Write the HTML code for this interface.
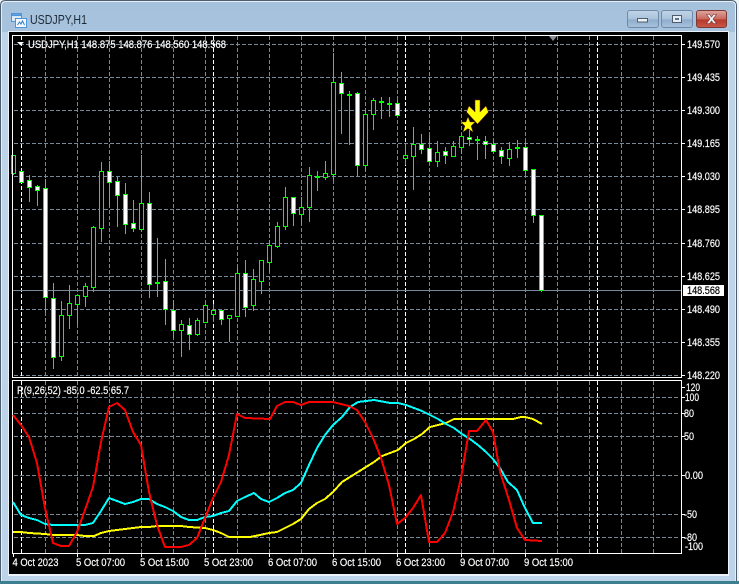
<!DOCTYPE html>
<html><head><meta charset="utf-8"><style>
html,body{margin:0;padding:0;width:739px;height:584px;overflow:hidden;background:#dfe8f1}
svg{display:block;position:absolute;left:0;top:0}
text{font-family:"Liberation Sans",sans-serif;font-size:11px;fill:#fff;stroke:#fff;stroke-width:.18px}
.c{shape-rendering:crispEdges}
</style></head><body>
<svg width="739" height="584" viewBox="0 0 739 584" xmlns="http://www.w3.org/2000/svg">
<defs>
<linearGradient id="tb" x1="0" y1="0" x2="0" y2="1"><stop offset="0" stop-color="#a6c1dc"/><stop offset="1" stop-color="#bed4e9"/></linearGradient>
<linearGradient id="side" x1="0" y1="0" x2="0" y2="1"><stop offset="0" stop-color="#bed4e9"/><stop offset="1" stop-color="#bcd3ea"/></linearGradient>
<linearGradient id="btn" x1="0" y1="0" x2="0" y2="1"><stop offset="0" stop-color="#c2d5e8"/><stop offset=".5" stop-color="#a9c2db"/><stop offset=".55" stop-color="#8faccb"/><stop offset="1" stop-color="#a9c3de"/></linearGradient>
<linearGradient id="cl" x1="0" y1="0" x2="0" y2="1"><stop offset="0" stop-color="#dfa79f"/><stop offset=".5" stop-color="#c9675c"/><stop offset=".55" stop-color="#b83a2b"/><stop offset="1" stop-color="#c9584a"/></linearGradient>
</defs>
<rect x="0" y="0" width="739" height="584" fill="#eef3f8"/>
<path d="M.5 583.5V5.5Q.5 .5 5.5 .5H731Q736.5 .5 736.5 6V583.5" fill="url(#tb)" stroke="#4d5f6e"/>
<path d="M1.5 582V6Q1.5 1.5 6 1.5H731Q735.5 1.5 735.5 6V582" fill="none" stroke="#e6eef6"/>
<rect x="2" y="32" width="733" height="549" fill="url(#side)"/>
<rect x="0" y="581" width="739" height="3" fill="#3d7f8f"/>
<rect x="8" y="31" width="721" height="545" fill="#eaf1f8"/>
<rect x="9" y="32" width="719" height="542" fill="#000"/>

<!-- title -->
<g class="c">
<rect x="11.5" y="13.5" width="10" height="8" fill="#d7e8f7" stroke="#4d95d6"/>
<rect x="11.5" y="13.5" width="10" height="2" fill="#5aa2e0" stroke="#4d95d6"/>
<rect x="15.5" y="18.5" width="11" height="9" fill="#f2f8fd" stroke="#4d95d6"/>
</g>
<path d="M17.5 25l2-3 1.500 2 1.500-3 2 4" fill="none" stroke="#2e7fc8" stroke-width="1"/>
<text x="30" y="24" textLength="57" lengthAdjust="spacingAndGlyphs" style="font-size:12.5px;fill:#1c2a38;stroke:none">USDJPY,H1</text>

<!-- buttons -->
<rect x="627.5" y="10.5" width="31" height="17" rx="2.500" fill="url(#btn)" stroke="#6f8aa8"/>
<rect x="637.500" y="18.500" width="10" height="3.500" fill="#eef3f8" stroke="#4e5c6b"/>
<rect x="661.5" y="10.5" width="31" height="17" rx="2.500" fill="url(#btn)" stroke="#6f8aa8"/>
<rect x="672.5" y="15.5" width="9" height="7" fill="#e6edf4" stroke="#4e5c6b"/>
<rect x="675" y="18" width="4" height="2" fill="#5d7590"/>
<rect x="696.5" y="10.5" width="30" height="17" rx="2.500" fill="url(#cl)" stroke="#7d3a34"/>
<path d="M706.500 14.500h3l2 2.500 2-2.500h3l-3.500 4.500 3.500 4.500h-3l-2-2.500-2 2.500h-3l3.500-4.500z" fill="#f3f3f3" stroke="#6b3a36" stroke-width=".6"/>

<!-- grid -->
<g class="c" fill="none">
<path stroke="#778899" stroke-dasharray="4 2" d="M14 44.500H680M14 77.500H680M14 110.500H680M14 143.500H680M14 176.500H680M14 209.500H680M14 243.500H680M14 276.500H680M14 309.500H680M14 342.500H680M14 375.500H680M14 397.500H680M14 413.500H680M14 436.500H680M14 475.500H680M14 514.500H680M14 537.500H680"/>
<path stroke="#778899" stroke-dasharray="4 2" d="M45.500 36V377M77.500 36V377M109.500 36V377M141.500 36V377M173.500 36V377M205.500 36V377M237.500 36V377M269.500 36V377M301.500 36V377M333.500 36V377M365.500 36V377M397.500 36V377M429.500 36V377M461.500 36V377M493.500 36V377M525.500 36V377M557.500 36V377M589.500 36V377M621.500 36V377M653.500 36V377M45.500 381V553M77.500 381V553M109.500 381V553M141.500 381V553M173.500 381V553M205.500 381V553M237.500 381V553M269.500 381V553M301.500 381V553M333.500 381V553M365.500 381V553M397.500 381V553M429.500 381V553M461.500 381V553M493.500 381V553M525.500 381V553M557.500 381V553M589.500 381V553M621.500 381V553M653.500 381V553"/>
<path stroke="#fff" stroke-dasharray="4 2" d="M21.500 36V377M213.500 36V377M405.500 36V377M597.500 36V377M21.500 381V553M213.500 381V553M405.500 381V553M597.500 381V553"/>
<path stroke="#778899" d="M13 290.500H682"/>

<!-- wicks -->
<path stroke="#00ff00" d="M13.500 155V175M21.500 171V183M29.500 175V202M37.500 185V206M45.500 179V313M53.500 283V369M61.500 301V361M69.500 285V329M77.500 295V324M85.500 283V307M93.500 226V292M101.500 162V242M109.500 161V206M117.500 177V227M125.500 183V234M133.500 200V232M141.500 155V231M149.500 192V298M157.500 238V297M165.500 259V325M173.500 300V338M181.500 320V357M189.500 318V350M197.500 318V336M205.500 304V322M213.500 304V322M221.500 310V325M229.500 315V342M237.500 268V317M245.500 260V317M253.500 269V311M261.500 260V294M269.500 240V272M277.500 222V248M285.500 187V230M293.500 197V226M301.500 197V225M309.500 167V222M317.500 171V191M325.500 161V180M333.500 53V180M341.500 72V134M349.500 91V145M357.500 92V176M365.500 110V171M373.500 98V130M381.500 97V119M389.500 97V117M397.500 100V116M405.500 143V165M413.500 127V190M421.500 134V154M429.500 135V161M437.500 141V167M445.500 147V164M453.500 141V156M461.500 134V154M469.500 130V146M477.500 136V160M485.500 136V159M493.500 142V152M501.500 147V164M509.500 142V166M517.500 140V158M525.500 142V174M533.500 169V223M541.500 215V292"/>
<!-- flat bodies -->
<path stroke="#00ff00" stroke-width="2" d="M155 283H160M347 95H352M315 177H320M379 102H384M387 104H392M475 140H480M515 148H520"/>
<!-- hollow bodies -->
<g fill="#000" stroke="#00ff00">
<rect x="11.500" y="155.500" width="4" height="18"/><rect x="59.500" y="315.500" width="4" height="41"/><rect x="67.500" y="303.500" width="4" height="12"/><rect x="75.500" y="295.500" width="4" height="9"/><rect x="83.500" y="286.500" width="4" height="10"/><rect x="91.500" y="227.500" width="4" height="60"/><rect x="99.500" y="171.500" width="4" height="57"/><rect x="139.500" y="203.500" width="4" height="26"/><rect x="179.500" y="324.500" width="4" height="6"/><rect x="195.500" y="320.500" width="4" height="14"/><rect x="203.500" y="305.500" width="4" height="17"/><rect x="211.500" y="310.500" width="4" height="4"/><rect x="227.500" y="315.500" width="4" height="3"/><rect x="235.500" y="273.500" width="4" height="43"/><rect x="251.500" y="279.500" width="4" height="26"/><rect x="259.500" y="260.500" width="4" height="21"/><rect x="267.500" y="245.500" width="4" height="17"/><rect x="275.500" y="226.500" width="4" height="20"/><rect x="283.500" y="197.500" width="4" height="29"/><rect x="299.500" y="207.500" width="4" height="7"/><rect x="307.500" y="175.500" width="4" height="32"/><rect x="323.500" y="173.500" width="4" height="4"/><rect x="331.500" y="82.500" width="4" height="92"/><rect x="363.500" y="114.500" width="4" height="51"/><rect x="371.500" y="100.500" width="4" height="14"/><rect x="403.500" y="155.500" width="4" height="3"/><rect x="411.500" y="144.500" width="4" height="12"/><rect x="435.500" y="152.500" width="4" height="9"/><rect x="451.500" y="146.500" width="4" height="10"/><rect x="459.500" y="136.500" width="4" height="11"/><rect x="507.500" y="149.500" width="4" height="9"/>
</g>
<!-- white bodies -->
<g fill="#fff" stroke="#00ff00">
<rect x="19.500" y="171.500" width="4" height="11"/><rect x="27.500" y="180.500" width="4" height="7"/><rect x="35.500" y="186.500" width="4" height="4"/><rect x="43.500" y="188.500" width="4" height="109"/><rect x="51.500" y="298.500" width="4" height="59"/><rect x="107.500" y="171.500" width="4" height="11"/><rect x="115.500" y="181.500" width="4" height="14"/><rect x="123.500" y="194.500" width="4" height="30"/><rect x="131.500" y="223.500" width="4" height="5"/><rect x="147.500" y="203.500" width="4" height="81"/><rect x="163.500" y="281.500" width="4" height="28"/><rect x="171.500" y="310.500" width="4" height="20"/><rect x="187.500" y="325.500" width="4" height="9"/><rect x="219.500" y="310.500" width="4" height="9"/><rect x="243.500" y="273.500" width="4" height="34"/><rect x="291.500" y="197.500" width="4" height="16"/><rect x="339.500" y="83.500" width="4" height="10"/><rect x="355.500" y="93.500" width="4" height="72"/><rect x="395.500" y="103.500" width="4" height="12"/><rect x="419.500" y="144.500" width="4" height="5"/><rect x="427.500" y="148.500" width="4" height="13"/><rect x="443.500" y="151.500" width="4" height="4"/><rect x="467.500" y="137.500" width="4" height="2"/><rect x="483.500" y="141.500" width="4" height="3"/><rect x="491.500" y="144.500" width="4" height="7"/><rect x="499.500" y="150.500" width="4" height="6"/><rect x="523.500" y="147.500" width="4" height="23"/><rect x="531.500" y="169.500" width="4" height="46"/><rect x="539.500" y="215.500" width="4" height="75"/>
</g>

<!-- frames -->
<rect x="12.500" y="35.500" width="669" height="342" stroke="#fff"/>
<rect x="12.500" y="380.500" width="669" height="173" stroke="#fff"/>
<path stroke="#fff" d="M682 44.500h3M682 77.500h3M682 110.500h3M682 143.500h3M682 176.500h3M682 209.500h3M682 243.500h3M682 276.500h3M682 309.500h3M682 342.500h3M682 375.500h3M682 387.500h3M682 397.500h3M682 413.500h3M682 436.500h3M682 475.500h3M682 514.500h3M682 537.500h3M13.500 553V557M77.500 553V557M141.500 553V557M205.500 553V557M269.500 553V557M333.500 553V557M397.500 553V557M461.500 553V557M525.500 553V557"/>
<rect x="683" y="285" width="41" height="11" fill="#fff"/>
</g>
<path d="M17 42h7l-3.500 3.500z" fill="#fff"/>
<path d="M549 36h8l-4 5z" fill="#8a8f96"/>

<!-- indicator lines -->
<g class="c" fill="none" stroke-width="2" stroke-linejoin="round">
<polyline stroke="#ffff00" points="13,532 21,532 29,533 45,534 53,535 77,535 85,536 94,536 101,533 109,531 117,530 125,529 133,528 141,527 149,527 157,526 181,526 189,527 205,528 213,530 221,533 229,537 250,537 260,535 269,533 277,532 285,528 293,524 301,519 309,509 317,503 325,499 333,492 342,482 350,477 358,472 366,467 374,462 382,456 398,450 406,443 414,439 422,434 430,427 438,425 446,423 454,419 513,419 521,417 525,417 533,419 542,424"/>
<polyline stroke="#00ffff" points="13,502 21,515 29,518 37,520 45,524 53,525 85,525 93,523 101,511 109,498 117,501 125,504 133,502 141,499 149,499 157,504 165,507 173,511 181,517 189,520 197,520 205,517 213,516 221,513 229,511 237,501 245,497 254,493 261,499 269,502 277,498 285,493 293,490 301,483 309,465 317,448 325,435 333,425 342,417 350,407 358,402 366,401 374,400 390,403 398,403 406,405 414,408 422,411 430,415 438,419 446,424 454,428 462,434 470,439 478,445 486,452 493,459 500,468 508,482 517,490 525,508 533,523 542,523"/>
<polyline stroke="#ff0000" points="13,415 21,425 29,437 37,463 45,508 53,543 61,546 69,546 77,532 85,510 93,487 101,442 109,407 117,403 125,410 133,432 141,445 149,492 157,525 165,547 181,547 189,545 197,538 205,518 213,498 221,482 229,455 237,414 245,418 270,419 277,406 285,402 293,402 301,405 309,402 333,402 349,406 357,410 365,422 373,438 381,458 389,485 397,524 405,518 413,508 421,495 429,542 437,542 445,533 453,512 461,478 469,431 477,431 486,420 493,432 500,472 509,500 517,528 525,540 542,541"/>
</g>

<!-- arrow & star -->
<polygon points="475,100 480,100 480,112 486,106 488.500,112 477.500,124 466.500,112 469,106 475,112" fill="#ffff00" stroke="#7a1a00" stroke-width=".5"/>
<polygon points="468,117 470,122 475,122 471,126 473,132 468,128.500 463,132 465,126 461,122 466,122" fill="#ffff00" stroke="#7a3a00" stroke-width=".4"/>

<!-- labels -->
<text x="28" y="48" textLength="198" lengthAdjust="spacingAndGlyphs">USDJPY,H1  148.875 148.876 148.560 148.568</text>
<text x="17" y="394" textLength="112" lengthAdjust="spacingAndGlyphs">R(9,26,52) -85.0 -62.5 65.7</text>
<g>
<text x="687" y="48" textLength="33" lengthAdjust="spacingAndGlyphs">149.570</text>
<text x="687" y="81" textLength="33" lengthAdjust="spacingAndGlyphs">149.435</text>
<text x="687" y="114" textLength="33" lengthAdjust="spacingAndGlyphs">149.300</text>
<text x="687" y="147" textLength="33" lengthAdjust="spacingAndGlyphs">149.165</text>
<text x="687" y="180" textLength="33" lengthAdjust="spacingAndGlyphs">149.030</text>
<text x="687" y="213" textLength="33" lengthAdjust="spacingAndGlyphs">148.895</text>
<text x="687" y="247" textLength="33" lengthAdjust="spacingAndGlyphs">148.760</text>
<text x="687" y="280" textLength="33" lengthAdjust="spacingAndGlyphs">148.625</text>
<text x="687" y="294" textLength="33" lengthAdjust="spacingAndGlyphs" style="fill:#000;stroke:#000">148.568</text>
<text x="687" y="313" textLength="33" lengthAdjust="spacingAndGlyphs">148.490</text>
<text x="687" y="346" textLength="33" lengthAdjust="spacingAndGlyphs">148.355</text>
<text x="687" y="379" textLength="33" lengthAdjust="spacingAndGlyphs">148.220</text>
<text x="686" y="391" textLength="14" lengthAdjust="spacingAndGlyphs">120</text>
<text x="685" y="401" textLength="14" lengthAdjust="spacingAndGlyphs">100</text>
<text x="684" y="417" textLength="10" lengthAdjust="spacingAndGlyphs">80</text>
<text x="684" y="440" textLength="10" lengthAdjust="spacingAndGlyphs">50</text>
<text x="685" y="479" textLength="18" lengthAdjust="spacingAndGlyphs">0.00</text>
<text x="684" y="518" textLength="13" lengthAdjust="spacingAndGlyphs">-50</text>
<text x="684" y="541" textLength="13" lengthAdjust="spacingAndGlyphs">-80</text>
<text x="685" y="550" textLength="18" lengthAdjust="spacingAndGlyphs">-100</text>
<text x="12.500" y="566" textLength="46" lengthAdjust="spacingAndGlyphs">4 Oct 2023</text>
<text x="76" y="566" textLength="49" lengthAdjust="spacingAndGlyphs">5 Oct 07:00</text>
<text x="140" y="566" textLength="49" lengthAdjust="spacingAndGlyphs">5 Oct 15:00</text>
<text x="204" y="566" textLength="49" lengthAdjust="spacingAndGlyphs">5 Oct 23:00</text>
<text x="268" y="566" textLength="49" lengthAdjust="spacingAndGlyphs">6 Oct 07:00</text>
<text x="332" y="566" textLength="49" lengthAdjust="spacingAndGlyphs">6 Oct 15:00</text>
<text x="396" y="566" textLength="49" lengthAdjust="spacingAndGlyphs">6 Oct 23:00</text>
<text x="460" y="566" textLength="49" lengthAdjust="spacingAndGlyphs">9 Oct 07:00</text>
<text x="524" y="566" textLength="49" lengthAdjust="spacingAndGlyphs">9 Oct 15:00</text>
</g>
</svg>
</body></html>
